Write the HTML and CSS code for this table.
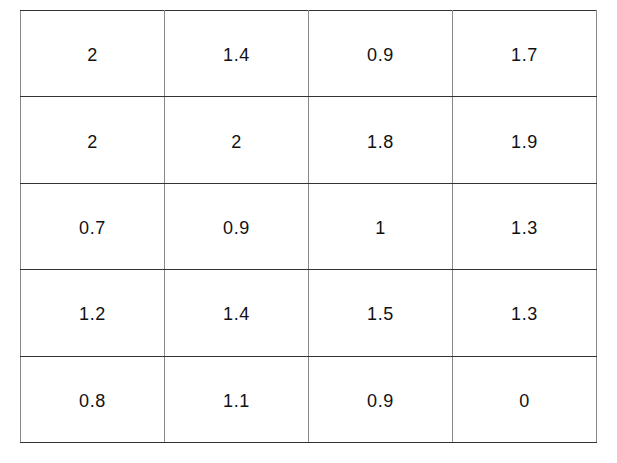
FILE: index.html
```html
<!DOCTYPE html>
<html>
<head>
	<title>table</title>
	<meta charset="utf-8"/>
	<link rel="stylesheet" href="styles.css">
</head>
<body>
	<table class="grid">
		<tr><td>2</td><td>1.4</td><td>0.9</td><td>1.7</td></tr>
		<tr><td>2</td><td>2</td><td>1.8</td><td>1.9</td></tr>
		<tr><td>0.7</td><td>0.9</td><td>1</td><td>1.3</td></tr>
		<tr><td>1.2</td><td>1.4</td><td>1.5</td><td>1.3</td></tr>
		<tr><td>0.8</td><td>1.1</td><td>0.9</td><td>0</td></tr>
	</table>
</body>
</html>
```

FILE: styles.css
```css
body{
	margin: 0;
	padding: 10px 20px;
	background-color: #fff;
	font-family: "Liberation Sans", Arial, sans-serif;
}
.grid{
	width: 577px;
	height: 433px;
	border-collapse: collapse;
	table-layout: fixed;
}
.grid td{
	padding: 4px 0 0 0;
	text-align: center;
	vertical-align: middle;
	font-size: 18px;
	letter-spacing: 0.6px;
	color: #111;
	border-top: 1px solid #333;
	border-bottom: 1px solid #333;
	border-left: 1px solid #888;
	border-right: 1px solid #888;
}
```
